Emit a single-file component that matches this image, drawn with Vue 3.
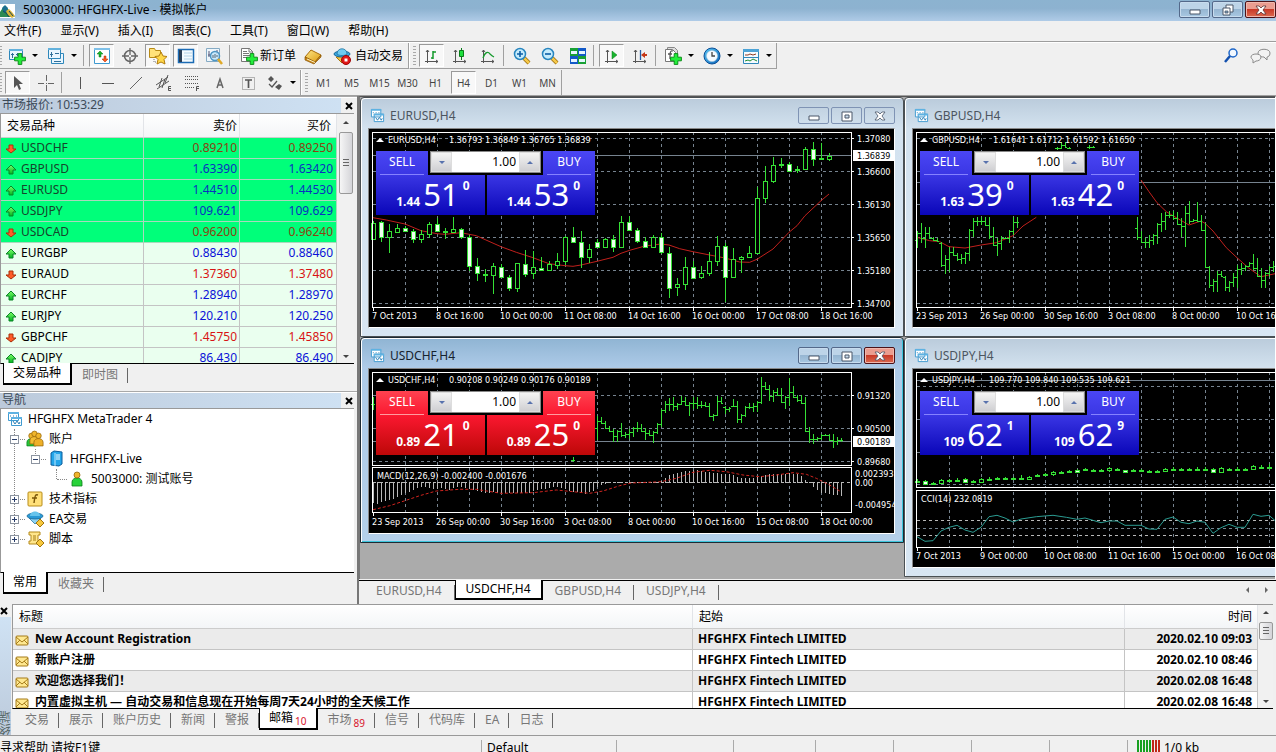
<script setup>
import { ref } from 'vue'

const menus = ['文件(F)', '显示(V)', '插入(I)', '图表(C)', '工具(T)', '窗口(W)', '帮助(H)']

const standardBar = [
  { icon: 'new-chart', label: '新图表', drop: true },
  { icon: 'profiles', label: '配置文件', drop: true },
  { sep: true },
  { icon: 'market', label: '市场报价', on: true },
  { icon: 'target', label: '数据窗口' },
  { icon: 'folder-star', label: '导航', on: true },
  { icon: 'terminal', label: '终端', on: true },
  { icon: 'tester', label: '策略测试' },
  { sep: true },
  { icon: 'order', label: '新订单', text: '新订单', size: 'order' },
  { icon: 'book', label: '编辑器' },
  { icon: 'auto', label: '自动交易', text: '自动交易', size: 'auto' },
]
const chartBar = [
  { icon: 'bars', label: '柱状图', on: true },
  { icon: 'candles', label: '蜡烛图' },
  { icon: 'line', label: '折线图' },
  { sep: true },
  { icon: 'zoom-in', label: '放大' },
  { icon: 'zoom-out', label: '缩小' },
  { icon: 'tiles', label: '平铺窗口' },
  { sep: true },
  { icon: 'scroll', label: '自动滚动', on: true },
  { icon: 'shift', label: '图表平移' },
  { sep: true },
  { icon: 'indicator', label: '指标', drop: true },
  { icon: 'clock', label: '周期', drop: true },
  { icon: 'template', label: '模板', drop: true },
]
const drawBar = [
  { icon: 'cursor', label: '光标', on: true },
  { icon: 'cross', label: '十字线' },
  { sep: true },
  { icon: 'vline', label: '垂直线' },
  { icon: 'hline', label: '水平线' },
  { icon: 'trend', label: '趋势线' },
  { icon: 'channel', label: '等距通道' },
  { icon: 'fibo', label: '斐波那契' },
  { icon: 'text-a', label: '文字' },
  { icon: 'text-t', label: '文字标签' },
  { icon: 'arrows', label: '箭头', drop: true },
]
const periods = ['M1', 'M5', 'M15', 'M30', 'H1', 'H4', 'D1', 'W1', 'MN']

const quotes = [
  ['USDCHF', '0.89210', '0.89250', 'down', true],
  ['GBPUSD', '1.63390', '1.63420', 'up', true],
  ['EURUSD', '1.44510', '1.44530', 'up', true],
  ['USDJPY', '109.621', '109.629', 'up', true],
  ['USDCAD', '0.96200', '0.96240', 'down', true],
  ['EURGBP', '0.88430', '0.88460', 'up', false],
  ['EURAUD', '1.37360', '1.37480', 'down', false],
  ['EURCHF', '1.28940', '1.28970', 'up', false],
  ['EURJPY', '120.210', '120.250', 'up', false],
  ['GBPCHF', '1.45750', '1.45850', 'down', false],
  ['CADJPY', '86.430', '86.490', 'up', false],
]

const tree = [
  { text: 'HFGHFX MetaTrader 4', icon: 'charts', level: 0 },
  { text: '账户', icon: 'users', level: 1, box: '-' },
  { text: 'HFGHFX-Live', icon: 'server', level: 2, box: '-' },
  { text: '5003000: 测试账号', icon: 'user', level: 3 },
  { text: '技术指标', icon: 'func', level: 1, box: '+' },
  { text: 'EA交易', icon: 'expert', level: 1, box: '+' },
  { text: '脚本', icon: 'script', level: 1, box: '+' },
]

const mails = [
  ['New Account Registration', '2020.02.10 09:03'],
  ['新账户注册', '2020.02.10 08:46'],
  ['欢迎您选择我们！', '2020.02.08 16:48'],
  ['内置虚拟主机 — 自动交易和信息现在开始每周7天24小时的全天候工作', '2020.02.08 16:48'],
]
const terminalTabs = [
  { text: '交易' }, { text: '展示' }, { text: '账户历史' }, { text: '新闻' }, { text: '警报' },
  { text: '邮箱', count: 10, on: true }, { text: '市场', count: 89 },
  { text: '信号' }, { text: '代码库' }, { text: 'EA' }, { text: '日志' },
]
const chartTabs = ['EURUSD,H4', 'USDCHF,H4', 'GBPUSD,H4', 'USDJPY,H4']
const activeChart = ref('USDCHF,H4')

// Price data keeps three units per pixel, with the plot origin at 102.
const y = v => Math.round((v - 102) / 3)
const curve = (list, x0) => list.map(([a, b]) => `${((a - x0) / 3 + 4).toFixed(1)},${((b - 102) / 3).toFixed(1)}`).join(' ')

// [high, body top, body bottom, low, filled]
const candles = (rows) => rows.map(([h, t, b, l, f], i) => ({
  x: 4 + i * 8, h: y(h), l: y(l), t: y(t), hgt: Math.max(1, y(b) - y(t)), f,
}))

// [high, low] runs, each beginning at a bar slot
const bars = (runs) => runs.flatMap(([start, rows]) => {
  const mid = r => (r[0] + r[1]) / 2
  const clamp = (v, r) => Math.min(r[1] - 3, Math.max(r[0] + 3, v))
  return rows.map((r, i) => {
    const close = clamp(mid(rows[i + 1] || r), r)
    const open = clamp(i ? clamp(mid(r), rows[i - 1]) : mid(r), r)
    return { x: 4 + (start + i) * 4, h: y(r[0]), l: y(r[1]), o: y(open), c: y(close) }
  })
})

const eurCandles = candles([
  [378, 383, 433, 433, 0], [378, 382, 425, 440, 1], [388, 408, 425, 475, 0], [388, 398, 410, 412, 0],
  [393, 398, 408, 412, 1], [403, 408, 433, 445, 1], [405, 418, 433, 443, 0], [380, 388, 418, 428, 0],
  [368, 388, 408, 412, 1], [400, 408, 412, 432, 0], [365, 403, 412, 415, 0], [398, 403, 425, 433, 1],
  [420, 425, 512, 528, 1], [490, 514, 535, 557, 1], [522, 536, 541, 562, 0], [505, 514, 541, 597, 0],
  [508, 517, 547, 550, 1], [540, 547, 580, 588, 1], [505, 505, 580, 590, 0], [465, 508, 537, 545, 1],
  [468, 517, 535, 553, 0], [485, 518, 524, 527, 1], [498, 508, 524, 527, 0], [473, 497, 509, 523, 0],
  [423, 425, 497, 510, 0], [395, 425, 440, 443, 1], [408, 440, 485, 518, 1], [448, 461, 485, 503, 0],
  [433, 442, 455, 460, 1], [428, 431, 455, 458, 0], [420, 431, 455, 470, 1], [362, 382, 455, 460, 0],
  [362, 382, 406, 408, 1], [400, 406, 437, 445, 1], [425, 438, 455, 460, 1], [420, 425, 455, 455, 0],
  [413, 425, 472, 478, 1], [457, 475, 578, 608, 1], [548, 567, 577, 603, 0], [487, 517, 568, 585, 0],
  [498, 517, 548, 553, 1], [513, 535, 547, 552, 0], [472, 499, 535, 542, 0], [423, 452, 499, 512, 0],
  [445, 452, 545, 620, 1], [460, 492, 545, 548, 0], [482, 485, 492, 533, 0], [453, 473, 485, 490, 0],
  [275, 310, 473, 478, 0], [212, 257, 310, 323, 0], [187, 211, 257, 263, 0], [190, 206, 211, 220, 0],
  [200, 206, 227, 232, 1], [213, 223, 226, 235, 0], [155, 163, 223, 225, 0], [140, 163, 193, 212, 1],
  [145, 190, 193, 193, 1], [175, 182, 191, 197, 0],
])
const eurMa = curve([[40, 368], [80, 375], [136, 387], [184, 407], [232, 416], [256, 418], [304, 413], [350, 422], [424, 455], [470, 472], [520, 488], [568, 506], [616, 512], [640, 514], [664, 510], [712, 499], [760, 487], [784, 475], [810, 466], [856, 453], [904, 447], [928, 450], [960, 461], [1000, 470], [1050, 480], [1096, 489], [1140, 501], [1170, 502], [1192, 493], [1240, 462], [1288, 412], [1312, 392], [1336, 362], [1384, 317], [1408, 297]], 40)

const gbpBars = bars([
  [0, [[408, 460], [385, 445], [395, 460], [397, 432], [425, 438], [430, 442], [440, 515], [480, 538], [455, 530], [457, 483], [473, 497], [478, 507], [472, 507], [403, 497], [370, 425], [365, 392], [365, 390], [365, 392], [365, 433], [395, 452], [428, 482], [423, 465], [425, 433], [405, 443], [365, 420], [365, 398]]],
  [35, [[155, 165], [140, 163], [140, 160], [155, 163]]],
  [43, [[150, 162], [152, 160]]],
  [55, [[365, 435], [408, 443], [430, 458], [420, 460], [418, 450], [385, 448], [355, 412], [352, 405], [348, 370], [347, 375], [350, 390], [368, 425], [333, 455], [318, 388], [373, 380], [320, 380], [360, 408], [385, 520], [513, 580], [552, 590], [527, 590], [528, 545], [543, 588], [558, 592], [533, 575], [510, 580], [505, 540], [510, 528], [500, 515], [478, 525], [490, 545], [520, 580], [530, 578], [513, 545], [498, 530]]],
])
const gbpMa = [
  curve([[52, 427], [90, 437], [120, 440], [148, 455], [196, 459], [244, 450], [290, 443], [340, 422], [370, 393], [410, 367]], 52),
  curve([[724, 255], [748, 290], [772, 323], [800, 350], [830, 368], [868, 390], [904, 378], [916, 385], [940, 408], [980, 458], [1012, 488], [1048, 520], [1084, 545], [1132, 535]], 52),
]

const chfBars = bars([
  [0, [[187, 225]]],
  [50, [[367, 380]]],
  [56, [[243, 315], [245, 268], [257, 283], [272, 292], [283, 322], [285, 322], [265, 305], [290, 308], [283, 313], [275, 305], [262, 290], [267, 290], [278, 315], [285, 303], [287, 323], [265, 297], [222, 277], [197, 233], [188, 227], [187, 227], [203, 225], [183, 210], [185, 213], [200, 242], [187, 222], [185, 222], [197, 220], [200, 217], [205, 247], [238, 257], [183, 243], [187, 208], [213, 237], [215, 230], [193, 217], [197, 265], [238, 265], [213, 247], [203, 222], [203, 230], [197, 230], [127, 207], [140, 165], [150, 197], [165, 200], [160, 182], [160, 205], [183, 222], [130, 212], [153, 188], [180, 200], [180, 207], [185, 292], [275, 325], [297, 328], [307, 318], [298, 315], [298, 303], [298, 318], [298, 338], [305, 330], [310, 320]]],
])
const macd = [505, 507, 502, 498, 495, 493, 485, 480, 473, 470, 465, 460, 457, 457, 460, 463, 463, 460, 463, 465, 460, 457, 457, 460, 463, 465, 468, 470, 475, 475, 472, 475, 473, 475, 473, 475, 475, 473, 475, 473, 467, 465, 463, 462, 460, 457, 457, 460, 463, 467, 470, 472, 475, 476, 472, 467, 457, 450, 447, 445, 444, 444, 444, 443, 444, 444, 443, 443, 443, 441, 440, 440, 437, 428, 420, 418, 413, 410, 408, 407, 405, 405, 407, 410, 412, 415, 415, 417, 417, 418, 420, 425, 428, 430, 428, 428, 427, 423, 420, 418, 417, 417, 417, 418, 415, 417, 418, 423, 435, 444, 455, 465, 473, 475, 477, 480, 480, 483]
  .map((v, i) => ({ x: 4 + i * 4, a: Math.min(113, y(v)), b: Math.max(113, y(v)) }))
const macdSignal = curve([[40, 524], [90, 512], [136, 497], [180, 482], [230, 468], [300, 463], [350, 463], [424, 475], [520, 473], [590, 465], [640, 470], [690, 475], [730, 468], [780, 452], [815, 444], [904, 440], [950, 430], [1000, 412], [1050, 406], [1100, 410], [1150, 420], [1200, 425], [1250, 420], [1300, 413], [1340, 418], [1370, 430], [1410, 450], [1440, 468]], 40)

const jpyCandles = candles([
  [433, 438, 441, 445, 0], [436, 438, 447, 447, 1], [441, 445, 447, 447, 0], [433, 436, 444, 446, 0],
  [431, 436, 438, 440, 0], [430, 434, 437, 440, 1], [430, 433, 440, 444, 1], [434, 438, 440, 444, 0],
  [430, 433, 441, 444, 0], [427, 431, 434, 438, 1], [426, 430, 432, 435, 0], [426, 430, 432, 435, 0],
  [426, 430, 432, 435, 0], [420, 429, 432, 432, 0], [424, 425, 431, 431, 0], [417, 419, 424, 425, 0],
  [413, 418, 420, 423, 0], [407, 411, 418, 424, 0], [409, 412, 414, 415, 0], [406, 409, 412, 415, 1],
  [402, 406, 410, 414, 1], [400, 403, 406, 409, 1], [402, 404, 407, 407, 1], [402, 405, 408, 411, 0],
  [396, 400, 406, 411, 0], [399, 401, 404, 404, 0], [405, 406, 410, 410, 1], [403, 405, 408, 408, 0],
  [401, 405, 407, 411, 0], [405, 407, 410, 411, 1], [405, 407, 410, 411, 1], [399, 401, 407, 408, 0],
  [397, 401, 403, 406, 0], [400, 401, 404, 404, 1], [400, 401, 404, 404, 1], [397, 401, 403, 405, 0],
  [397, 401, 403, 405, 0], [399, 402, 411, 413, 1], [396, 400, 410, 411, 0], [400, 402, 404, 406, 0],
  [397, 401, 404, 406, 1], [400, 402, 405, 406, 1], [390, 394, 401, 402, 0], [391, 395, 397, 401, 0],
  [387, 395, 398, 402, 0],
])
const cci = curve([[52, 605], [76, 619], [100, 617], [124, 588], [148, 577], [172, 571], [196, 585], [220, 592], [244, 577], [268, 545], [292, 541], [316, 549], [340, 561], [364, 552], [410, 545], [460, 541], [500, 547], [532, 553], [556, 549], [604, 563], [628, 558], [652, 558], [676, 571], [724, 571], [748, 582], [772, 583], [796, 553], [820, 546], [844, 562], [868, 566], [892, 558], [916, 562], [940, 595], [964, 578], [988, 568], [1012, 577], [1036, 577], [1060, 538], [1084, 544], [1108, 541], [1132, 562]], 52)

const windows = [
  {
    id: 'eur', title: 'EURUSD,H4', buttons: true, height: 198,
    ohlc: '1.36793 1.36849 1.36765 1.36839', ohlcX: 80,
    grid: [9, 42, 75, 108, 141, 174], price: 26, boxes: [[3, 175]],
    dates: ['7 Oct 2013', '8 Oct 16:00', '10 Oct 00:00', '11 Oct 08:00', '14 Oct 16:00', '16 Oct 00:00', '17 Oct 08:00', '18 Oct 16:00'],
    axis: [[9, '1.37080'], [42, '1.36600'], [75, '1.36130'], [108, '1.35650'], [141, '1.35180'], [174, '1.34700']],
    mark: [26, '1.36839'],
    candles: eurCandles, bars: [], lines: [eurMa],
    sell: ['1.44', '51', '0'], buy: ['1.44', '53', '0'],
  },
  {
    id: 'gbp', title: 'GBPUSD,H4', height: 198,
    ohlc: '1.61641 1.61712 1.61592 1.61650', ohlcX: 80,
    grid: [9, 42, 75, 108, 141, 174], price: 53, boxes: [[3, 175]],
    dates: ['23 Sep 2013', '26 Sep 00:00', '30 Sep 16:00', '3 Oct 08:00', '8 Oct 00:00', '10 Oct 16:00'],
    axis: [], candles: [], bars: gbpBars, lines: gbpMa,
    sell: ['1.63', '39', '0'], buy: ['1.63', '42', '0'],
  },
  {
    id: 'chf', title: 'USDCHF,H4', buttons: true, active: true, height: 164,
    ohlc: '0.90208 0.90249 0.90176 0.90189', ohlcX: 80,
    grid: [26, 59, 92], price: 72, boxes: [[3, 93], [98, 45]],
    dates: ['23 Sep 2013', '26 Sep 00:00', '30 Sep 16:00', '3 Oct 08:00', '8 Oct 00:00', '10 Oct 16:00', '15 Oct 08:00', '18 Oct 00:00'],
    axis: [[26, '0.91320'], [59, '0.90500'], [92, '0.89680']],
    mark: [72, '0.90189'],
    candles: [], bars: chfBars, lines: [],
    sell: ['0.89', '21', '0'], buy: ['0.89', '25', '0'],
  },
  {
    id: 'jpy', title: 'USDJPY,H4', height: 198,
    ohlc: '109.770 109.840 109.535 109.621', ohlcX: 76,
    grid: [17, 50, 83, 115], price: 11, boxes: [[3, 115], [121, 57]],
    dates: ['7 Oct 2013', '9 Oct 00:00', '10 Oct 08:00', '11 Oct 16:00', '15 Oct 00:00', '16 Oct 08:00'],
    axis: [], candles: jpyCandles, bars: [], lines: [],
    sell: ['109', '62', '1'], buy: ['109', '62', '9'],
  },
]
const bottomOf = w => w.boxes[w.boxes.length - 1][0] + w.boxes[w.boxes.length - 1][1]
const verticals = Array.from({ length: 14 }, (_, i) => 36 + i * 32)
const lots = ref({ eur: '1.00', gbp: '1.00', chf: '1.00', jpy: '1.00' })
</script>

<template>
  <div class="app">
    <svg class="defs" aria-hidden="true">
      <defs>
        <linearGradient id="gGreen" x1="0" y1="0" x2="0" y2="1"><stop offset="0" stop-color="#7dff6a" /><stop offset="1" stop-color="#00b41e" /></linearGradient>
        <linearGradient id="gGold" x1="0" y1="0" x2="1" y2="1"><stop offset="0" stop-color="#ffe98a" /><stop offset="1" stop-color="#dc9a10" /></linearGradient>
        <linearGradient id="gBlue" x1="0" y1="0" x2="1" y2="1"><stop offset="0" stop-color="#5cc8f5" /><stop offset="1" stop-color="#0a63b8" /></linearGradient>
      </defs>
      <symbol id="plus" viewBox="0 0 10 10"><path d="M3.500.5h3v3h3v3h-3v3h-3v-3h-3v-3h3z" fill="#22ee3a" stroke="#0a8a18" stroke-width=".8" /></symbol>
      <symbol id="logo" viewBox="0 0 16 16"><path fill="#fff" d="M0 1h15v14H0z" /><path d="M0 14V9l4-6 4 3 3 4 4 4z" fill="#2d8a52" /><path d="M2 5l3-3 3 3-1 4-3 1z" fill="#1b6f8e" /><path d="M6 8l3-2 3 3 3 4-3 2-4-3z" fill="#d9b13a" /><path d="M3 8l3 2 3 4M9 8l4 5" stroke="#174a5c" fill="none" /></symbol>
      <symbol id="charts" viewBox="0 0 16 16"><g fill="#fff" stroke="#3f9ad0"><path d="M1.500 1.500h10v8h-10zM4.500 6.500h10v8h-10z" /></g><path d="M1 1h11v2H1zM4 6h11v2H4z" fill="#5eb2e2" /><path d="M6 10l2 3 2-3 2 3 1-2M3 5h1M6 5h1M9 5h1" stroke="#2e7fb5" fill="none" /></symbol>
      <symbol id="new-chart" viewBox="0 0 18 18"><path d="M1.500 2.500h13v10h-13z" fill="#e9f6ff" stroke="#2f87ba" /><path d="M1 2h14v2H1z" fill="#63b1dc" /><path d="M4.500 11V6M3 7.500h3M9.500 6v3M8 7.500h3" stroke="#2f6f99" fill="none" /><use href="#plus" x="6" y="6" width="12" height="12" /></symbol>
      <symbol id="profiles" viewBox="0 0 18 18"><g fill="#e9f6ff" stroke="#2f87ba"><path d="M4.500 6.500h12v10h-12z" /><path d="M1.500 1.500h12v10h-12z" /></g><path d="M1 1h13v2H1z" fill="#63b1dc" /><path d="M3 7.500h3M4.500 5v5M8 6.500h4M7 14.500h7" stroke="#2f6f99" fill="none" /></symbol>
      <symbol id="market" viewBox="0 0 18 18"><path d="M1.500 1.500h15v15h-15z" fill="#fff" stroke="#3f9ad0" /><path d="M1 1h16v2H1z" fill="#7ec0e8" /><path d="M7 4l3 3H8v3H6V7H4z" fill="#16b52a" stroke="#0b7718" stroke-width=".5" /><path d="M12 15l-3-3h2V9h2v3h2z" fill="#ff5a1f" stroke="#a52c05" stroke-width=".5" /></symbol>
      <symbol id="target" viewBox="0 0 18 18"><circle cx="9" cy="9" r="5.500" fill="none" stroke="#666" stroke-width="1.500" /><path d="M9 1v7M9 10v7M1 9h7M10 9h7" stroke="#666" stroke-width="1.300" /></symbol>
      <symbol id="folder-star" viewBox="0 0 18 18"><path d="M.5 1.500h5l1 2h5v7H.5z" fill="#ffe27a" stroke="#b78a16" /><path d="M5 12v3h3" stroke="#777" stroke-dasharray="1 1" fill="none" /><path d="M12 5l2 4 4 .5-3 3 1 4.500-4-2-4 2 1-4.500-3-3L10 9z" fill="#ffd84a" stroke="#b27c0c" /></symbol>
      <symbol id="terminal" viewBox="0 0 18 18"><path d="M1.500 2.500h15v13h-15z" fill="#f4fbff" stroke="#1c6cb5" stroke-width="1.500" /><path d="M2 3h3v12H2z" fill="#2a3f57" /><path d="M7 6h8M7 9h8M7 12h8" stroke="#b4d3e8" /></symbol>
      <symbol id="tester" viewBox="0 0 18 18"><path d="M1.500 1.500h13v13h-13z" fill="#eef6fb" stroke="#85aac4" /><path d="M4 4v6M3 8h2M12 3v4" stroke="#557" /><circle cx="10" cy="9" r="4.500" fill="#bfe6fb" fill-opacity=".8" stroke="#4c95c4" stroke-width="1.500" /><path d="M8 11V8M10 11V7M12 10V8" stroke="#567" /><path d="M13 12l4 5" stroke="#e0a928" stroke-width="2.500" /></symbol>
      <symbol id="order" viewBox="0 0 18 18"><path d="M1.500 1.500h8l3 3v10h-11z" fill="#fff" stroke="#777" /><path d="M9 1v4h4M3 6.500h6M3 8.500h7M3 10.500h4M3 4.500h4" stroke="#777" fill="none" /><use href="#plus" x="6" y="6" width="12" height="12" /></symbol>
      <symbol id="book" viewBox="0 0 18 18"><path d="M1 10l6-7 10 5-6 7z" fill="url(#gGold)" stroke="#a86b08" /><path d="M1 10v3l9 4 7-7V8l-6 7z" fill="#c98618" stroke="#8a5605" stroke-width=".7" /><path d="M3 12l8 3.500" stroke="#fff3c4" /></symbol>
      <symbol id="auto" viewBox="0 0 18 18"><path d="M3 10l6 6 7-7z" fill="#f5c544" stroke="#a9760b" /><ellipse cx="9" cy="7" rx="8" ry="3" fill="#3aa5dd" stroke="#176997" /><path d="M4 7c0-7 10-7 10 0-2 2-8 2-10 0z" fill="#6fcaf0" stroke="#176997" stroke-width=".7" /><circle cx="13" cy="13" r="4.500" fill="#e01717" stroke="#a00505" /><path d="M11.500 11.500h3v3h-3z" fill="#fff" /></symbol>
      <symbol id="axes" viewBox="0 0 18 18"><path d="M4.500 3v13M2 14.500h13M3 5l1.500-2L6 5M13 13l2 1.500-2 1.500" fill="none" stroke="#555" /></symbol>
      <symbol id="bars" viewBox="0 0 18 18"><use href="#axes" /><path d="M10 4v8M10 5h3M8 11h2" stroke="#149a2c" stroke-width="1.500" /></symbol>
      <symbol id="candles" viewBox="0 0 18 18"><use href="#axes" /><path d="M10.500 1v12" stroke="#087c19" /><path d="M8.500 3.500h4v6h-4z" fill="#1de03c" stroke="#087c19" /></symbol>
      <symbol id="line" viewBox="0 0 18 18"><use href="#axes" /><path d="M4 11c2-6 5-7 7-4 1 1 2 2 4 3" fill="none" stroke="#149a2c" stroke-width="1.300" /></symbol>
      <symbol id="lens" viewBox="0 0 18 18"><path d="M11 11l5 5" stroke="#9a6a08" stroke-width="4" /><path d="M11 11l5 5" stroke="#f5c94a" stroke-width="2.500" /><circle cx="7" cy="7" r="5.500" fill="#c6ecfc" stroke="#2785bf" stroke-width="1.500" /></symbol>
      <symbol id="zoom-in" viewBox="0 0 18 18"><use href="#lens" /><path d="M4 7h6M7 4v6" stroke="#0d5ea5" stroke-width="1.600" /></symbol>
      <symbol id="zoom-out" viewBox="0 0 18 18"><use href="#lens" /><path d="M4 7h6" stroke="#0d5ea5" stroke-width="1.600" /></symbol>
      <symbol id="tiles" viewBox="0 0 18 18"><path d="M1 1h8v8H1zM9 9h8v8H9z" fill="#18a035" /><path d="M9 1h8v8H9zM1 9h8v8H1z" fill="#1259c8" /><path d="M2 4h6v3H2zM10 4h6v3h-6zM2 12h6v3H2zM10 12h6v3h-6z" fill="#e5f5ff" /></symbol>
      <symbol id="scroll" viewBox="0 0 18 18"><use href="#axes" /><path d="M9 4l5 4-5 4z" fill="#19b52f" stroke="#087c19" stroke-width=".5" /></symbol>
      <symbol id="shift" viewBox="0 0 18 18"><use href="#axes" /><path d="M9.500 3v10" stroke="#225ca8" stroke-width="1.300" /><path d="M10 8l4-3v2h2v2h-2v2z" fill="#c43718" /></symbol>
      <symbol id="indicator" viewBox="0 0 18 18"><path d="M3.500.5h7l3 3v9h-10z" fill="#ddd" stroke="#888" /><path d="M1.500 2.500h7l3 3v9h-10z" fill="#fff" stroke="#777" /><path d="M9 4c-3-1-3 2-3 8M4 7h4" fill="none" stroke="#555" stroke-width="1.300" /><use href="#plus" x="6" y="6" width="12" height="12" /></symbol>
      <symbol id="clock" viewBox="0 0 18 18"><circle cx="9" cy="9" r="8" fill="url(#gBlue)" stroke="#0b4f97" /><circle cx="9" cy="9" r="5.500" fill="#f5faff" stroke="#bcd" stroke-width=".5" /><path d="M9 5v4h3" fill="none" stroke="#444" stroke-width="1.300" /></symbol>
      <symbol id="template" viewBox="0 0 18 18"><path d="M1.500 2.500h15v14h-15z" fill="#f6fbff" stroke="#2f87ba" /><path d="M1 2h16v3H1z" fill="#4da3d6" /><path d="M3 8h3l2-1 3 1 3-1" fill="none" stroke="#8d3a22" /><path d="M1 10.500h16" stroke="#2f87ba" /><path d="M3 14l3-1 2 1 3-2 4 2" fill="none" stroke="#1d8c33" /></symbol>
      <symbol id="cursor" viewBox="0 0 18 18"><path d="M5 2v12l3-3 2 5 2-1-2-5h4z" fill="#555" /></symbol>
      <symbol id="cross" viewBox="0 0 18 18"><path d="M9 1v6M9 11v6M1 9h6M11 9h6M9 9h1" stroke="#666" shape-rendering="crispEdges" /></symbol>
      <symbol id="vline" viewBox="0 0 18 18"><path d="M9 3v12" stroke="#555" shape-rendering="crispEdges" /></symbol>
      <symbol id="hline" viewBox="0 0 18 18"><path d="M3 9h12" stroke="#555" shape-rendering="crispEdges" /></symbol>
      <symbol id="trend" viewBox="0 0 18 18"><path d="M3 15L15 3" stroke="#666" /></symbol>
      <symbol id="channel" viewBox="0 0 18 18"><path d="M1 11L13 3M2 15L14 7M4 13l3-9M7 14l3-9M10 9l3-8" stroke="#555" /><path d="M16 12.500h-2.500v4H16M13 14.500h3" fill="none" stroke="#555" /></symbol>
      <symbol id="fibo" viewBox="0 0 18 18"><path d="M2 2.500h14M2 5.500h14M2 9.500h14M2 13.500h9" stroke="#555" stroke-dasharray="1 1" /><path d="M16 12.500h-2.500V17M13 14.500h3" fill="none" stroke="#555" /></symbol>
      <symbol id="text-a" viewBox="0 0 18 18"><path d="M6 14l3-9 3 9M7 11h4" fill="none" stroke="#666" stroke-width="1.500" /></symbol>
      <symbol id="text-t" viewBox="0 0 18 18"><path d="M3.500 3.500h12v12h-12z" fill="none" stroke="#777" stroke-dasharray="1 1" /><path d="M6 6h7M9.500 6v8" stroke="#555" stroke-width="1.700" /></symbol>
      <symbol id="arrows" viewBox="0 0 18 18"><path d="M2 5l3-3 3 3-3 3zM9 13l4 3 3-4-3-2z" fill="#555" /><path d="M3 10l3 3 5-6" stroke="#555" fill="none" stroke-width="1.300" /></symbol>
      <symbol id="find" viewBox="0 0 18 18"><circle cx="11" cy="6" r="4" fill="#f2f8ff" stroke="#1e66c8" stroke-width="1.500" /><path d="M8 9l-5 6" stroke="#1350ae" stroke-width="2.500" /></symbol>
      <symbol id="chat" viewBox="0 0 22 18"><g fill="#f3f3f3" stroke="#8a8a8a"><path d="M8 6c0-5 12-5 12 0 0 3-2 4-3 4v3l-3-3c-4 0-6-2-6-4z" /><path d="M1 10c0-4 10-4 10 0 0 3-3 4-5 4l-3 2v-3c-1-1-2-2-2-3z" /></g></symbol>
      <symbol id="up" viewBox="0 0 12 12"><path d="M6 1l5 5H8v4H4V6H1z" fill="url(#gGreen)" stroke="#0b8426" /></symbol>
      <symbol id="down" viewBox="0 0 12 12"><path d="M6 10L1 6h3V2h4v4h3z" fill="#ff5c28" stroke="#a8300a" /></symbol>
      <symbol id="man" viewBox="0 0 12 16"><path d="M1 15V11c0-3 3-4 5-4s5 1 5 4v4z" stroke-width=".8" /><circle cx="6" cy="4" r="3" fill="#f0b52c" stroke="#94640a" stroke-width=".8" /></symbol>
      <symbol id="users" viewBox="0 0 18 18"><use href="#man" x="0" y="2" width="11" height="15" fill="#28c43a" stroke="#0b7f1b" /><use href="#man" x="3" y="0" width="11" height="15" fill="#f3bd35" stroke="#94640a" /><use href="#man" x="7" y="2" width="11" height="15" fill="#eeb029" stroke="#94640a" /></symbol>
      <symbol id="user" viewBox="0 0 18 18"><use href="#man" x="2" y="1" width="14" height="16" fill="#28d23a" stroke="#0b7f1b" /></symbol>
      <symbol id="server" viewBox="0 0 18 18"><path d="M4 3l3-2 8 1v12l-3 2-8-1z" fill="#25a6ea" stroke="#0a5d9c" /><path d="M8 3v13" stroke="#bde8ff" /><path d="M9 5h4M9 7h4M9 9h4" stroke="#fff" /></symbol>
      <symbol id="func" viewBox="0 0 18 18"><rect x="2" y="2" width="14" height="14" rx="1" fill="#ffe07a" stroke="#b88c18" /><path d="M12 5c-3-1-3 1-4 8M6 8h5" stroke="#7b5608" fill="none" stroke-width="1.400" /></symbol>
      <symbol id="expert" viewBox="0 0 18 18"><path d="M3 8l6 6 6-6z" fill="#8fd3f2" stroke="#1a6b9c" stroke-width=".7" /><ellipse cx="9" cy="6" rx="8" ry="3" fill="#2a9ad6" stroke="#15618f" stroke-width=".7" /><path d="M4 6c0-6 10-6 10 0z" fill="#67c4ec" /><path d="M14 9l4 4-4 4-4-4z" fill="#f7c83e" stroke="#a1760f" /></symbol>
      <symbol id="script" viewBox="0 0 18 18"><path d="M3 2h11v3h-2v6l1 3H3v-3h2V5H3z" fill="#ffe68c" stroke="#b58a1b" /><path d="M7 6h3M7 8h3M7 10h3" stroke="#a67c14" /><path d="M14 9l4 4-4 4-4-4z" fill="#f7c83e" stroke="#a1760f" /></symbol>
      <symbol id="mail" viewBox="0 0 14 12"><rect x="1" y="2" width="12" height="9" rx="1" fill="#ffe890" stroke="#a57a18" /><path d="M1 3l6 5 6-5M1 10l4-4M13 10L9 6" fill="none" stroke="#a57a18" /></symbol>
    </svg>

    <header class="titlebar">
      <svg class="logo"><use href="#logo" /></svg>
      <h1>5003000: HFGHFX-Live - 模拟帐户</h1>
      <div class="wbtns main">
        <button aria-label="最小化"><svg viewBox="0 0 12 12"><path d="M1 6h10v4H1z" fill="#fff" stroke="#4a5668" /></svg></button>
        <button aria-label="还原"><svg viewBox="0 0 12 12"><path d="M4 1h7v7H4z" fill="#fff" stroke="#4a5668" /><path d="M1 4h7v7H1z" fill="#fff" stroke="#4a5668" /><path d="M3 7h3v2H3z" fill="#7fa3c0" stroke="#4a5668" stroke-width=".8" /></svg></button>
        <button class="close" aria-label="关闭"><svg viewBox="0 0 12 12"><path d="M1 2h3l2 2 2-2h3L8 6l3 4H8L6 8l-2 2H1l3-4z" fill="#fff" stroke="#5a3434" stroke-width=".8" /></svg></button>
      </div>
    </header>

    <nav class="menubar"><button v-for="m in menus" :key="m">{{ m }}</button></nav>

    <div class="tools">
      <div class="toolrow">
        <div v-for="(bar, n) in [standardBar, chartBar]" :key="n" class="bar" :class="{ first: n === 0 }">
          <i class="grip"></i>
          <template v-for="(t, i) in bar" :key="i">
            <i v-if="t.sep" class="sep"></i>
            <button v-else class="tool" :class="[{ on: t.on, drop: t.drop }, t.size]" :aria-label="t.label">
              <svg class="ic"><use :href="'#' + t.icon" /></svg><span v-if="t.text">{{ t.text }}</span><i v-if="t.drop" class="caret"></i>
            </button>
          </template>
        </div>
        <div class="righttools">
          <button aria-label="搜索"><svg class="ic"><use href="#find" /></svg></button>
          <button aria-label="聊天"><svg class="ic chat"><use href="#chat" /></svg></button>
        </div>
      </div>
      <div class="toolrow">
        <div class="bar first">
          <i class="grip"></i>
          <template v-for="(t, i) in drawBar" :key="i">
            <i v-if="t.sep" class="sep"></i>
            <button v-else class="tool" :class="{ on: t.on, drop: t.drop }" :aria-label="t.label">
              <svg class="ic"><use :href="'#' + t.icon" /></svg><i v-if="t.drop" class="caret"></i>
            </button>
          </template>
        </div>
        <div class="bar">
          <i class="grip"></i>
          <button v-for="p in periods" :key="p" class="tool period" :class="{ on: p === 'H4' }">{{ p }}</button>
        </div>
      </div>
    </div>

    <main class="work">
      <aside class="side">
        <section class="panel watch">
          <div class="caption"><span>市场报价: 10:53:29</span><button aria-label="关闭市场报价"><svg viewBox="0 0 8 8"><path d="M1 1l6 6M7 1L1 7" stroke="#000" stroke-width="2" /></svg></button></div>
          <div class="pane">
            <div class="clip">
              <table class="quotes">
                <thead><tr><th>交易品种</th><th class="num">卖价</th><th class="num">买价</th></tr></thead>
                <tbody>
                  <tr v-for="q in quotes" :key="q[0]" :class="[q[3], { hot: q[4] }]">
                    <td><svg class="dir"><use :href="'#' + q[3]" /></svg>{{ q[0] }}</td>
                    <td class="num">{{ q[1] }}</td><td class="num">{{ q[2] }}</td>
                  </tr>
                </tbody>
              </table>
            </div>
            <div class="scroll"><i class="tri up"></i><i class="thumb"></i><i class="tri dn"></i></div>
          </div>
          <div class="tabs"><button class="on">交易品种</button><button>即时图</button></div>
        </section>
        <section class="panel navi">
          <div class="caption"><span>导航</span><button aria-label="关闭导航"><svg viewBox="0 0 8 8"><path d="M1 1l6 6M7 1L1 7" stroke="#000" stroke-width="2" /></svg></button></div>
          <div class="pane">
            <ul class="tree">
              <li v-for="n in tree" :key="n.text" :class="'l' + n.level">
                <i v-if="n.level > 1" class="elbow"></i>
                <button v-if="n.box" class="box" :aria-label="'展开 ' + n.text"><svg viewBox="0 0 7 7"><path :d="n.box === '+' ? 'M1 3h5v1H1zM3 1h1v5H3z' : 'M1 3h5v1H1z'" fill="#2b3f6b" /></svg></button>
                <i v-if="n.level" class="dots"></i>
                <svg class="node"><use :href="'#' + n.icon" /></svg><span>{{ n.text }}</span>
              </li>
            </ul>
          </div>
          <div class="tabs"><button class="on">常用</button><button>收藏夹</button></div>
        </section>
      </aside>

      <section class="desk">
        <div class="mdi">
          <article v-for="w in windows" :key="w.id" class="win" :class="[w.id, { active: w.active }]">
            <header>
              <svg class="badge"><use href="#charts" /></svg>
              <h2>{{ w.title }}</h2>
              <div v-if="w.buttons" class="wbtns">
                <button aria-label="最小化"><svg viewBox="0 0 12 12"><path d="M1 6h10v4H1z" fill="#fff" stroke="#4a5668" /></svg></button>
                <button aria-label="最大化"><svg viewBox="0 0 12 12"><path d="M1 2h10v9H1z" fill="#fff" stroke="#4a5668" /><path d="M4 5h4v3H4z" fill="#c9dcec" stroke="#4a5668" /></svg></button>
                <button :class="{ close: w.active }" aria-label="关闭"><svg viewBox="0 0 12 12"><path d="M1 2h3l2 2 2-2h3L8 6l3 4H8L6 8l-2 2H1l3-4z" fill="#fff" stroke="#4a5668" stroke-width=".8" /></svg></button>
              </div>
            </header>
            <div class="body">
              <svg class="chart" :style="{ height: w.height + 'px' }">
                <g class="px">
                  <path class="grid" :d="verticals.map(x => `M${x} 3V${bottomOf(w)}`).join('')" />
                  <path class="grid" :d="w.grid.map(g => `M4 ${g}H482`).join('')" />
                  <path class="price" :d="`M4 ${w.price}H482`" />
                </g>
                <polyline v-for="(l, i) in w.lines" :key="i" class="ma" :points="l" />
                <g class="px">
                  <template v-for="(c, i) in w.candles" :key="i">
                    <path class="lime" :d="`M${c.x} ${c.h}V${c.l}`" />
                    <rect class="lime" :class="{ fill: c.f && c.hgt > 1, hollow: !c.f }" :x="c.x - 2" :y="c.t" width="4" :height="c.hgt" />
                  </template>
                  <path class="lime" :d="w.bars.map(b => `M${b.x} ${b.h}V${b.l}M${b.x - 2} ${b.o}h2M${b.x} ${b.c}h2`).join('')" />
                </g>
                <template v-if="w.id === 'chf'">
                  <rect x="4" y="96" width="478" height="2" />
                  <g class="px">
                    <path class="level" d="M4 113H482" />
                    <path class="hist" :d="macd.map(m => `M${m.x} ${m.a}V${m.b}M${m.x} 113h2`).join('')" />
                  </g>
                  <polyline class="signal" :points="macdSignal" />
                  <text x="8" y="110">MACD(12,26,9) -0.002400 -0.001676</text>
                  <text x="486" y="108">0.002393</text><text x="486" y="117">0.00</text><text x="486" y="139">-0.004954</text>
                </template>
                <template v-if="w.id === 'jpy'">
                  <rect x="4" y="119" width="478" height="2" />
                  <g class="px"><path class="level" d="M4 151H482M4 166H482" /><path class="grid" d="M4 159H482" /></g>
                  <polyline class="cci" :points="cci" />
                  <text x="8" y="133">CCI(14) 232.0819</text>
                </template>
                <g class="px">
                  <rect v-for="(b, i) in w.boxes" :key="i" class="frame" x="3" :y="b[0]" width="479" :height="b[1]" />
                  <path class="tick" :d="w.dates.map((d, i) => `M${4 + i * 64} ${bottomOf(w)}v4`).join('') + w.axis.map(a => `M482 ${a[0]}h3`).join('')" />
                </g>
                <path d="M7 13l4-4 4 4z" fill="#fff" />
                <text x="19" y="14">{{ w.title }}</text>
                <text :x="w.ohlcX" y="14">{{ w.ohlc }}</text>
                <text v-for="(d, i) in w.dates" :key="d" :x="3 + i * 64" :y="w.height - 8">{{ d }}</text>
                <text v-for="a in w.axis" :key="a[1]" x="488" :y="a[0] + 4">{{ a[1] }}</text>
                <template v-if="w.mark"><rect x="484" :y="w.mark[0] - 5" width="41" height="11" fill="#fff" /><text x="488" :y="w.mark[0] + 4" class="dark">{{ w.mark[1] }}</text></template>
              </svg>
              <div class="ticket" :class="{ red: w.active }">
                <div class="top">
                  <button class="side-btn"><span>SELL</span></button>
                  <div class="lot">
                    <button aria-label="减少手数"><i class="tri dn"></i></button>
                    <input v-model="lots[w.id]" :aria-label="w.title + ' 手数'" />
                    <button aria-label="增加手数"><i class="tri up"></i></button>
                  </div>
                  <button class="side-btn"><span>BUY</span></button>
                </div>
                <div class="prices">
                  <div v-for="(p, i) in [w.sell, w.buy]" :key="i" class="quote"><b>{{ p[0] }}</b><strong>{{ p[1] }}</strong><sup>{{ p[2] }}</sup></div>
                </div>
              </div>
            </div>
          </article>
        </div>
        <div class="chart-tabs">
          <div class="tabs"><button v-for="t in chartTabs" :key="t" :class="{ on: t === activeChart }" @click="activeChart = t">{{ t }}</button></div>
          <div class="pager"><i class="tri lt"></i><i class="tri rt"></i></div>
        </div>
      </section>
    </main>

    <section class="term">
      <div class="term-side">
        <button aria-label="关闭终端"><svg viewBox="0 0 8 8"><path d="M1 1l6 6M7 1L1 7" stroke="#000" stroke-width="2" /></svg></button>
        <div class="term-cap"><span>终端</span></div>
      </div>
      <div class="term-main">
        <div class="pane">
          <div class="clip">
            <table class="mails">
              <thead><tr><th class="subj">标题</th><th class="from">起始</th><th class="time">时间</th></tr></thead>
              <tbody>
                <tr v-for="(m, i) in mails" :key="i">
                  <td><svg class="mail"><use href="#mail" /></svg>{{ m[0] }}</td><td>HFGHFX Fintech LIMITED</td><td class="time">{{ m[1] }}</td>
                </tr>
              </tbody>
            </table>
          </div>
          <div class="scroll"><i class="tri up"></i><i class="thumb"></i><i class="tri dn"></i></div>
        </div>
        <div class="tabs"><button v-for="t in terminalTabs" :key="t.text" :class="{ on: t.on }">{{ t.text }}<em v-if="t.count">{{ t.count }}</em></button></div>
      </div>
    </section>

    <footer class="status">
      <span class="help">寻求帮助 请按F1键</span><span class="prof">Default</span><span class="c1"></span><span class="c2"></span><span class="c3"></span><span class="c3"></span><span class="c3"></span><span class="c3"></span>
      <span class="conn"><svg viewBox="0 0 24 12"><path d="M1 0v12M4 0v12M7 0v12M10 0v12M13 0v12" stroke="#18a020" stroke-width="2" /><path d="M16 0v12M19 0v12M22 0v12" stroke="#c02818" stroke-width="2" /></svg>1/0 kb</span>
    </footer>
  </div>
</template>

<style>
html, body { margin: 0; height: 100%; overflow: hidden; }
</style>

<style scoped>
.app { height: 100vh; display: flex; flex-direction: column; background: #f0f0f0; color: #000; font: 12px/16px "Noto Sans", "Noto Sans CJK SC", sans-serif; overflow: hidden; }
.app * { box-sizing: border-box; }
.defs { position: absolute; width: 0; height: 0; }
button { font: inherit; color: inherit; background: none; border: 0; padding: 0; margin: 0; }
h1, h2 { font: inherit; margin: 0; }
i { display: block; flex: none; }

.titlebar { height: 21px; flex: none; display: flex; align-items: center; background: linear-gradient(#8cb3d0, #8db2d0 40%, #afcbe7); }
.logo { width: 16px; height: 16px; margin-right: 7px; }
.titlebar h1 { flex: 1; padding-bottom: 1px; }
.wbtns { display: flex; gap: 2px; }
.wbtns button { width: 31px; height: 17px; border: 1px solid #7f93b4; border-radius: 2px; display: flex; align-items: center; justify-content: center; background: transparent; }
.wbtns svg { width: 12px; height: 12px; }
.wbtns.main button, .active .wbtns button { border-color: #54698a; background: linear-gradient(#bdd4e8 45%, #96b6d2 50%, #a9c8e2); box-shadow: inset 0 0 0 1px #c8dcee; }
.wbtns.main { align-self: flex-start; margin-top: 1px; }
.wbtns.main .close, .active .wbtns .close { border-color: #4b1218; background: linear-gradient(#eb9d90 45%, #c93a28 50%, #dc6a50); box-shadow: inset 0 0 0 1px #f0b8ae; }

.menubar { height: 21px; flex: none; display: flex; gap: 19px; padding-left: 4px; border-bottom: 1px solid #9d9d9d; }
.tools { flex: none; border-top: 1px solid #fff; }
.toolrow { display: flex; height: 26px; }
.toolrow + .toolrow { height: 27px; padding-top: 1px; border-bottom: 1px solid #a0a0a0; }
.bar { display: flex; align-items: center; gap: 3px; padding-right: 1px; border-right: 1px solid #a0a0a0; border-bottom: 1px solid #a0a0a0; }
.bar + .bar { padding-left: 3px; border-left: 1px solid #fff; }
.toolrow + .toolrow .bar { border-bottom: 0; }
.grip { width: 3px; height: 20px; background: repeating-linear-gradient(#a8a8a8 0 1px, transparent 1px 3px); }
.bar.first .grip { width: 2px; }
.sep { width: 3px; height: 21px; border-left: 1px solid #a0a0a0; }
.tool { width: 25px; height: 23px; display: flex; align-items: center; justify-content: center; border: 1px solid transparent; }
.tool.on { background: #f8f8f8; border-color: #999 #fff #fff #999; }
.tool.drop { width: 36px; justify-content: space-between; padding: 0 2px; }
.tool.order { width: 62px; gap: 2px; justify-content: flex-end; }
.tool.auto { width: 79px; gap: 4px; justify-content: flex-start; padding-left: 4px; }
.tool.period { font-size: 10px; color: #444; }
.ic { width: 18px; height: 18px; flex: none; }
.caret { border: 3px solid transparent; border-top-color: #000; border-bottom: 0; }
.righttools { margin-left: auto; display: flex; align-items: center; gap: 10px; padding-right: 4px; }
.righttools button { display: flex; }
.ic.chat { width: 22px; }

.work { flex: 1; min-height: 0; display: flex; }
.side { width: 359px; flex: none; display: flex; flex-direction: column; border-right: 2px solid #777; }
.panel { display: flex; flex-direction: column; min-height: 0; border-top: 1px solid #a8a8a8; }
.watch { flex: 297 1 0; padding-bottom: 6px; }
.navi { flex: 208 1 0; padding-bottom: 10px; }
.caption { height: 16px; flex: none; display: flex; background: linear-gradient(90deg, #bccadb, #cfe2f4); padding-left: 2px; color: #3c4a58; border-top: 1px solid #fff; }
.caption span { flex: 1; line-height: 14px; }
.caption button { width: 16px; height: 100%; background: #f0f0f0; display: flex; align-items: center; justify-content: center; }
.caption svg, .term-side svg { width: 8px; height: 8px; }
.pane { flex: 1; min-height: 0; display: flex; background: #fff; border: 1px solid #999; border-right: 0; border-bottom: 1px solid #000; }
.side .pane { margin-right: 3px; }
.clip { flex: 1; min-width: 0; overflow: hidden; }
table { width: 100%; border-collapse: separate; border-spacing: 0; table-layout: fixed; }
th { height: 24px; padding: 0 6px; text-align: left; font-weight: 400; background: linear-gradient(#fff, #f3f5f7); border-right: 1px solid #e2e4e8; border-bottom: 1px solid #ccc; }
td { height: 21px; padding: 0; white-space: nowrap; border-right: 1px solid #c4c4c4; border-bottom: 1px solid #c4c4c4; }
.quotes th.num, .quotes td.num { text-align: right; width: 97px; padding-right: 3px; }
.quotes th.num { padding-right: 5px; }
.quotes .num:nth-child(2) { width: 96px; padding-right: 2px; }
.quotes td { background: #eaffef; }
.quotes .hot td { background: #00ff7a; color: #16442c; border-color: #a9d8bd; }
.quotes td.num { color: #0b12d8; }
.quotes .down td.num { color: #d81414; }
.quotes .hot td.num { color: #0a30c0; }
.quotes .hot.down td.num { color: #8a4410; }
.dir { width: 12px; height: 12px; margin: 0 4px 0 4px; vertical-align: -3px; }
.scroll { width: 17px; flex: none; background: #f1f1f1; display: flex; flex-direction: column; align-items: center; padding: 7px 0 5px; }
.tri { border: 3px solid transparent; }
.tri.up { border-bottom-color: #444; border-top: 0; }
.tri.dn { border-top-color: #444; border-bottom: 0; }
.tri.lt { border-right-color: #666; border-left: 0; }
.tri.rt { border-left-color: #666; border-right: 0; }
.thumb { width: 14px; height: 62px; margin: 8px 0 auto; border: 1px solid #999; border-radius: 2px; background: repeating-linear-gradient(#666 0 1px, transparent 1px 3px) center / 6px 8px no-repeat, linear-gradient(90deg, #f6f6f6, #d4d4d8); }

.tabs { display: flex; flex: none; height: 21px; color: #777; padding-left: 3px; }
.tabs button { padding: 0 10px; position: relative; white-space: nowrap; }
.tabs button:not(.on)::after { content: ""; position: absolute; right: 0; top: 4px; height: 15px; border-right: 1px solid #666; }
.tabs .on { color: #000; background: #fff; border: 1px solid #000; border-top: 0; border-right-width: 2px; border-bottom-width: 2px; margin-top: -1px; z-index: 1; padding: 0 9px; }

.tree { list-style: none; margin: 0; padding: 0; position: relative; }
.tree::before { content: ""; position: absolute; left: 13px; top: 20px; height: 108px; border-left: 1px dotted #888; }
.tree li { height: 20px; display: flex; align-items: center; position: relative; }
.l0 { padding-left: 6px; }
.l1 { padding-left: 9px; }
.l2 { padding-left: 30px; }
.l3 { padding-left: 55px; }
.box { width: 9px; height: 9px; border: 1px solid #8c94a0; background: #fff; display: flex; position: relative; z-index: 1; }
.box svg { width: 7px; height: 7px; }
.dots { width: 5px; border-top: 1px dotted #888; margin: 0 1px 0 1px; }
.l3 .dots { width: 10px; }
.elbow { position: absolute; left: 34px; top: 0; height: 7px; border-left: 1px dotted #888; }
.l3 .elbow { left: 55px; height: 10px; }
.node { width: 18px; height: 18px; margin-right: 5px; }
.l0 .node { width: 16px; height: 16px; }

.desk { flex: 1; min-width: 0; display: flex; flex-direction: column; }
.mdi { flex: 1; min-height: 0; position: relative; overflow: hidden; background: #ababab; border-top: 1px solid #555; border-left: 1px solid #777; border-right: 1px solid #fff; }
.win { position: absolute; width: 544px; border: 1px solid #4a5054; border-radius: 4px 4px 0 0; box-shadow: inset 1px 1px 0 #fff; background: linear-gradient(#bacbdb, #d3e2ef 30px, #d8e6f3); padding: 0 8px 8px 7px; }
.win.eur { left: 0; top: 0; }
.win.gbp { left: 544px; top: 0; }
.win.chf { left: 0; top: 240px; }
.win.jpy { left: 544px; top: 240px; }
.win.active { background: linear-gradient(#8fb4d3, #aecbe8 30px, #b4d0ea); border-color: #1d2a33; box-shadow: inset 1px 1px 0 #fff, inset -1px -1px 0 #3cc5dc; }
.win > header { height: 30px; display: flex; align-items: center; padding: 5px 0 0 2px; }
.badge { width: 15px; height: 15px; flex: none; margin-right: 5px; }
.win h2 { flex: 1; color: #4c5560; }
.win.active h2 { color: #16222e; }
.body { position: relative; border: 1px solid #888; border-right-color: #fff; border-bottom-color: #fff; background: #000; }
.chart { display: block; width: 100%; overflow: hidden; }
.chart text { font: 9px "DejaVu Sans Condensed", "DejaVu Sans", sans-serif; fill: #fff; }
.chart text.dark { fill: #000; }
.px { shape-rendering: crispEdges; }
.px path, .px rect { fill: none; }
.grid { stroke: #76838f; stroke-dasharray: 3 3; }
.price { stroke: #76838f; }
.ma { fill: none; stroke: #c0201c; }
.lime { stroke: #35e035; }
.px rect.fill { fill: #f0fff0; }
.px rect.hollow { fill: #000; }
.hist { stroke: #b8b8b8; }
.level { stroke: #b8b8b8; stroke-dasharray: 3 3; }
.signal { fill: none; stroke: #d0241f; stroke-dasharray: 3 2; }
.cci { fill: none; stroke: #2b9c92; }
.frame, .tick { stroke: #fff; }

.ticket { position: absolute; left: 7px; top: 22px; width: 219px; color: #fff; --a: #4a46f4; --b: #3a36e4; --c: #0a06b8; --e: #8582ff; }
.ticket.red { --a: #ff4250; --b: #fb1830; --c: #bd0808; --e: #ff9b9f; }
.top { display: flex; justify-content: space-between; height: 24px; background: #000; }
.side-btn { width: 52px; background: linear-gradient(var(--a), var(--b)); padding: 0 4px; }
.side-btn span { display: block; line-height: 22px; height: 24px; border-bottom: 1px solid var(--e); }
.lot { width: 111px; height: 22px; display: flex; border: 1px solid #888; background: #fff; }
.lot button { width: 21px; display: flex; align-items: center; justify-content: center; background: linear-gradient(#f4f4f4, #cfcfd2); border: 1px solid #ddd; }
.lot .tri.up { border-bottom-color: #5872ad; }
.lot .tri.dn { border-top-color: #5872ad; }
.lot input { flex: 1; min-width: 0; border: 0; padding: 0 3px; font: inherit; text-align: right; background: #fff; color: #000; }
.prices { display: flex; gap: 2px; height: 40px; background: #000; }
.quote { flex: 1; display: flex; align-items: baseline; justify-content: flex-end; padding-right: 15px; background: linear-gradient(var(--b), var(--c)); }
.quote b { font-size: 12px; line-height: 16px; margin-right: 3px; }
.quote strong { font: 400 31px/38px "Noto Sans", sans-serif; }
.quote sup { font: bold 12px/12px "Noto Sans", sans-serif; align-self: flex-start; margin: 5px 0 0 4px; }

.chart-tabs { height: 24px; flex: none; display: flex; justify-content: space-between; border-top: 1px solid #000; margin-top: 1px; }
.chart-tabs .tabs { height: 19px; padding-left: 5px; line-height: 18px; }
.chart-tabs .tabs button { padding: 0 13px 0 12px; }
.chart-tabs .tabs .on { padding: 0 10px; }
.pager { display: flex; gap: 16px; align-items: center; padding: 0 8px 5px 0; }

.term { flex: none; height: 131px; display: flex; }
.term-side { width: 11px; display: flex; flex-direction: column; }
.term-side button { height: 13px; display: flex; align-items: center; }
.term-cap { flex: 1; background: linear-gradient(#cfe2f4, #bccadb); display: flex; align-items: flex-end; overflow: hidden; color: #566; }
.term-cap span { writing-mode: vertical-rl; transform: rotate(180deg); line-height: 12px; }
.term-main { flex: 1; min-width: 0; display: flex; flex-direction: column; padding: 0 3px 5px 1px; }
.term-main .pane { border-left: 1px solid #999; }
.mails { font-weight: 700; }
.mails td { padding-left: 5px; }
.mails td:first-child { padding-left: 2px; }
.mails tbody tr:nth-child(odd) td { background: #ebebeb; }
.mails .from { width: 432px; }
.mails .time { width: 133px; text-align: right; padding-right: 5px; }
.mail { width: 14px; height: 12px; margin-right: 6px; vertical-align: -3px; }
.term-main .scroll { width: 15px; padding-top: 6px; }
.term-main .thumb { height: 18px; }
.tabs em { font: 10px/10px "Noto Sans", sans-serif; color: #d8142c; margin-left: 2px; position: relative; top: 3px; }

.status { flex: none; height: 17px; display: flex; border-top: 1px solid #999; overflow: hidden; padding-top: 4px; }
.status span { border-right: 1px solid #aaa; height: 24px; line-height: 16px; white-space: nowrap; }
.status .help { flex: 1; min-width: 0; }
.prof { width: 135px; padding-left: 5px; }
.c1 { width: 117px; }
.c2 { width: 82px; }
.c3 { width: 78px; }
.status .conn { width: 148px; padding-left: 9px; display: flex; gap: 3px; border: 0; }
.conn svg { width: 24px; height: 12px; }
</style>
